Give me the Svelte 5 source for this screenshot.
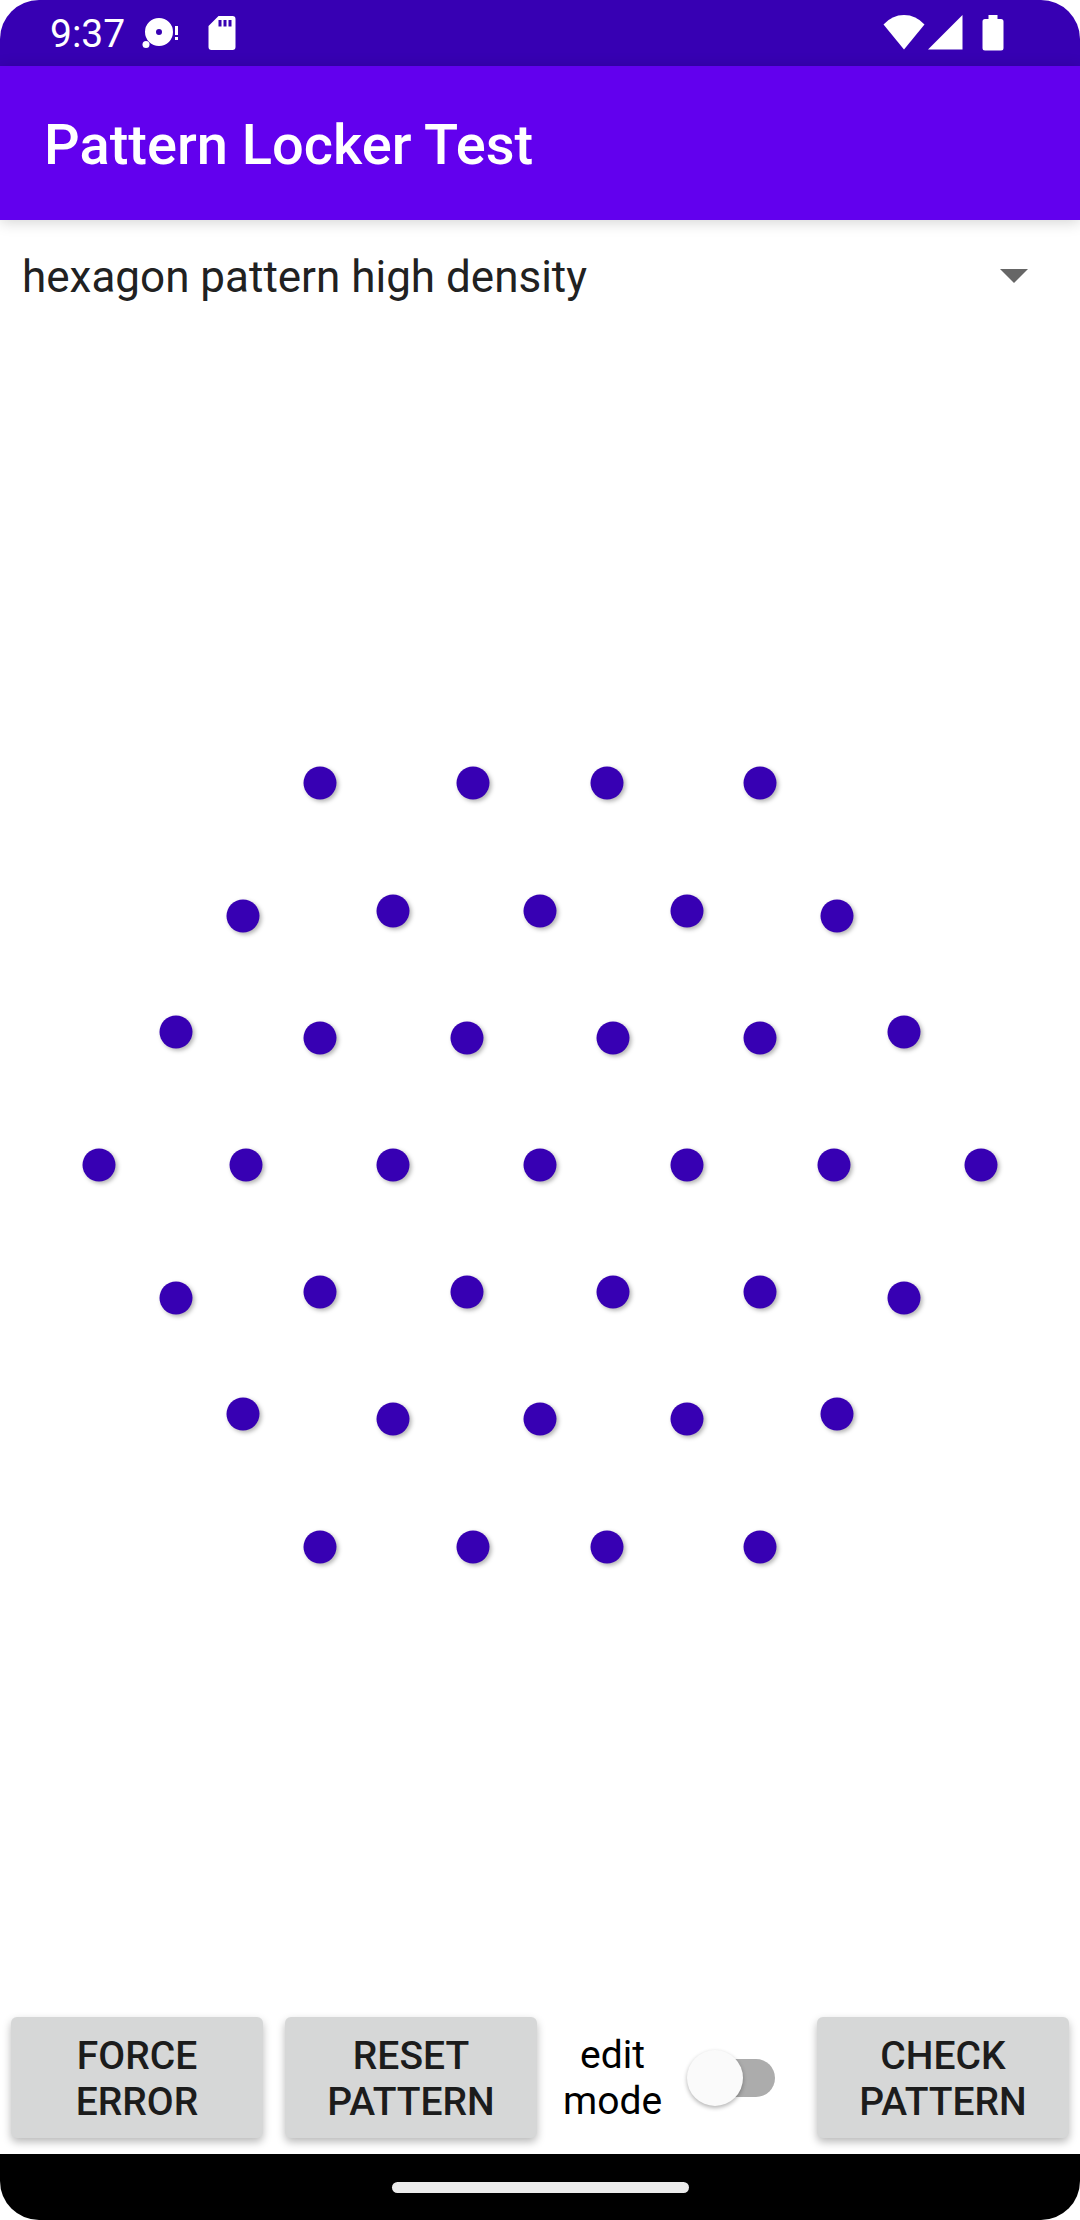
<script>
  const patterns = ['hexagon pattern high density', 'hexagon pattern low density', 'square pattern'];
  let pattern = $state(patterns[0]);
  let editMode = $state(false);

  // Node centres by row; the lower half mirrors the upper one.
  const upper = [
    [[320, 158], [473, 158], [607, 158], [760, 158]],
    [[243, 291], [393, 286], [540, 286], [687, 286], [837, 291]],
    [[176, 407], [320, 413], [467, 413], [613, 413], [760, 413], [904, 407]]
  ];
  const middle = [[99, 540], [246, 540], [393, 540], [540, 540], [687, 540], [834, 540], [981, 540]];
  const half = upper.flat();
  const nodes = [...half, ...middle, ...half.map(([x, y]) => [x, 1080 - y])];
</script>

<div class="screen">
  <div class="status">
    <span class="time">9:37</span>
    <svg class="disc" width="40" height="36" viewBox="0 0 40 36" aria-hidden="true">
      <path fill-rule="evenodd" d="M18 3a14 14 0 1 0 0 28a14 14 0 1 0 0-28zM18 14a3 3 0 1 1 0 6a3 3 0 1 1 0-6z" />
      <circle cx="5" cy="29.500" r="3.500" />
      <path d="M34 11h3v9h-3zM34 22h3v3h-3z" />
    </svg>
    <svg width="28" height="36" viewBox="0 0 28 36" aria-hidden="true">
      <path fill-rule="evenodd" d="M10.500 1H24.500a3 3 0 0 1 3 3V32a3 3 0 0 1-3 3H3.500a3 3 0 0 1-3-3V11zM10.500 5v6.500h3V5zM15.500 5v6.500h3V5zM20.500 5v6.500h3V5z" />
    </svg>
    <div class="signals">
      <svg width="42" height="36" viewBox="0 0 42 36" aria-hidden="true">
        <path d="M.5 9.500Q9 0 21 0T41.500 9.500L21 34.500z" />
      </svg>
      <svg width="36" height="36" viewBox="0 0 36 36" aria-hidden="true">
        <path d="M0 34.500L34.500 0V34.500z" />
      </svg>
      <svg class="battery" width="22" height="36" viewBox="0 0 22 36" aria-hidden="true">
        <path d="M6.500 0h9v4H19a2.500 2.500 0 0 1 2.500 2.500V33A2.500 2.500 0 0 1 19 35.500H3A2.500 2.500 0 0 1 .5 33V6.500A2.500 2.500 0 0 1 3 4h3.500z" />
      </svg>
    </div>
  </div>

  <header>
    <h1>Pattern Locker Test</h1>
  </header>

  <main>
    <div class="spinner">
      <select aria-label="Pattern" bind:value={pattern}>
        {#each patterns as name}
          <option value={name}>{name}</option>
        {/each}
      </select>
      <svg width="28" height="14" viewBox="0 0 28 14" aria-hidden="true"><path d="M0 0H28L14 14z" /></svg>
    </div>

    <div class="board">
      <svg viewBox="0 0 1080 1080" role="img" aria-label="Pattern nodes">
        {#each nodes as [x, y]}
          <circle cx={x} cy={y} r="16.5" />
        {/each}
      </svg>
    </div>

    <div class="actions">
      <button type="button">FORCE ERROR</button>
      <button type="button">RESET PATTERN</button>
      <label for="edit-mode">
        <span>edit<br />mode</span>
        <input id="edit-mode" type="checkbox" role="switch" bind:checked={editMode} />
      </label>
      <button type="button">CHECK PATTERN</button>
    </div>
  </main>

  <div class="nav"><div class="pill"></div></div>
</div>

<style>
  :global(body) {
    margin: 0;
    background: #fff;
  }

  .screen {
    display: flex;
    flex-direction: column;
    min-height: 100vh;
    border-radius: 39px;
    overflow: hidden;
    background: #fff;
    font-family: Roboto, 'Liberation Sans', sans-serif;
  }

  .status {
    display: flex;
    align-items: center;
    box-sizing: border-box;
    height: 66px;
    padding: 0 76px 0 50px;
    background: #3700b3;
    color: #fff;
    fill: #fff;
  }

  .time {
    padding-top: 2px;
    font-size: 39px;
    line-height: 64px;
  }

  .disc {
    margin: 0 27px 0 16px;
  }

  .signals {
    display: flex;
    gap: 3px;
    margin-left: auto;
  }

  .battery {
    margin-left: 15px;
  }

  header {
    display: flex;
    align-items: center;
    box-sizing: border-box;
    height: 154px;
    padding: 4px 44px 0;
    background: #6200ee;
    box-shadow: 0 2px 14px rgba(0, 0, 0, 0.18);
    z-index: 1;
  }

  h1 {
    margin: 0;
    color: #fff;
    font-size: 56px;
    font-weight: 500;
    line-height: 64px;
  }

  main {
    flex: 1;
    display: flex;
    flex-direction: column;
  }

  .spinner {
    display: grid;
    align-items: center;
    height: 112px;
  }

  .spinner > * {
    grid-area: 1 / 1;
  }

  .spinner svg {
    justify-self: end;
    margin-right: 52px;
    fill: #666;
    pointer-events: none;
  }

  select {
    appearance: none;
    width: 100%;
    height: 112px;
    padding: 2px 100px 0 22px;
    border: 0;
    background: transparent;
    color: #212121;
    font: 400 44px Roboto, 'Liberation Sans', sans-serif;
  }

  .board {
    flex: 1;
    display: flex;
    align-items: center;
  }

  .board svg {
    width: 100%;
    fill: #3700b3;
    filter: drop-shadow(2px 2px 2px rgba(0, 0, 0, 0.3));
  }

  .actions {
    display: flex;
    gap: 22px;
    padding: 19px 11px 16px;
  }

  button {
    flex: 1 1 0;
    padding: 16px 22px 13px;
    border: 0;
    border-radius: 6px;
    background: #d6d7d7;
    box-shadow: 0 4px 8px rgba(0, 0, 0, 0.28);
    color: #1c1c1c;
    font: 500 39px/46px Roboto, 'Liberation Sans', sans-serif;
  }

  label {
    flex: 0 0 236px;
    display: flex;
    align-items: center;
    justify-content: space-between;
    box-sizing: border-box;
    padding: 0 20px 0 4px;
    color: #000;
    font-size: 39px;
    line-height: 46px;
    text-align: center;
  }

  input {
    appearance: none;
    display: flex;
    align-items: center;
    width: 82px;
    height: 38px;
    margin: 0;
    border-radius: 19px;
    background: #acacac;
  }

  input::before {
    content: '';
    flex: none;
    width: 56px;
    height: 56px;
    margin-left: -6px;
    border-radius: 50%;
    background: #fafafa;
    box-shadow: 0 2px 4px rgba(0, 0, 0, 0.3);
  }

  input:checked::before {
    margin-left: 32px;
    background: #03dac5;
  }

  .nav {
    display: flex;
    align-items: center;
    justify-content: center;
    height: 66px;
    background: #000;
  }

  .pill {
    width: 297px;
    height: 11px;
    border-radius: 6px;
    background: #ebebeb;
  }
</style>
